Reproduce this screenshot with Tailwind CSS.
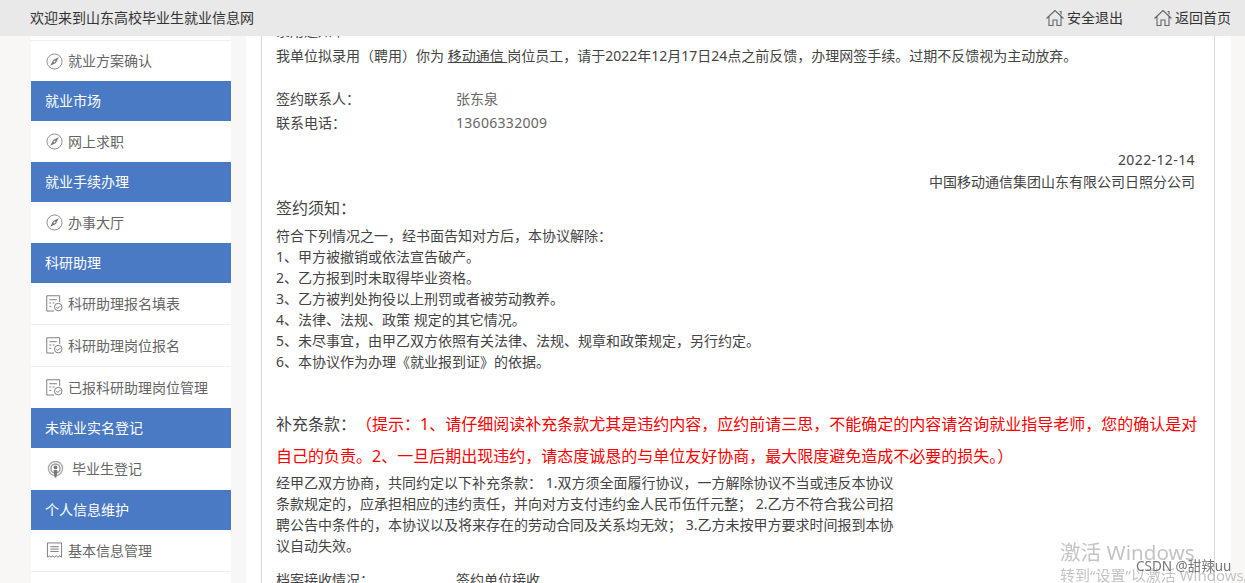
<!DOCTYPE html>
<html lang="zh-CN">
<head>
  <meta charset="UTF-8" />
  <title>山东高校毕业生就业信息网</title>
  <script src="https://cdn.jsdelivr.net/npm/@tailwindcss/browser@4"></script>
</head>
<body class="bg-[#f8f7f6] h-[583px] overflow-hidden font-['Noto_Sans','Noto_Sans_CJK_SC',sans-serif] text-sm text-[#444]">
  <svg class="hidden">
    <symbol id="compass" viewBox="0 0 18 18"><circle cx="9" cy="9" r="8" fill="none" stroke="#888" stroke-width="1"/><path d="M13.500 4.500 7.500 7.500 4.500 13.500l6-3z" fill="#777"/><circle cx="9" cy="9" r="1" fill="#fff"/></symbol>
    <symbol id="form" viewBox="0 0 18 18"><path d="M8.500 17H.8V.8h13.700v6.700M3.500 5h8M3.500 8.500h2M7 8.500h2M3.500 12h2" fill="none" stroke="#777"/><circle cx="13" cy="12.800" r="4" fill="#fff" stroke="#777"/><path d="m11 12.800 1.500 1.500 2.500-2.500" fill="none" stroke="#777"/></symbol>
    <symbol id="podcast" viewBox="0 0 18 18"><circle cx="9" cy="8" r="7.500" fill="none" stroke="#aaa" stroke-width="1.500"/><circle cx="9" cy="8" r="4.800" fill="none" stroke="#999" stroke-width="1.500"/><circle cx="9" cy="6.800" r="2" fill="#777"/><path d="M7 9.500h4L10 17.500H8z" fill="#777"/></symbol>
    <symbol id="doc" viewBox="0 0 18 18"><path d="M1.500 16V1h15v15l-1.900-1.300L12.700 16l-1.900-1.300L9 16l-1.800-1.300L5.300 16l-1.900-1.300zM4.500 5h9M4.500 7.500h9M4.500 10h9" fill="none" stroke="#777"/></symbol>
    <symbol id="home" viewBox="0 0 18 18"><path d="M.5 9.500 9 1.500l8.500 8M3 7.500V16.500h4V11h4v5.500h4V7.500M13.500 2.500h1.500v3" fill="none" stroke="#666" stroke-width="1.100"/></symbol>
  </svg>

  <header class="relative z-10 h-9 bg-[#e9e9e9] flex items-center justify-between pl-[30px] pr-[14px] text-[#333]">
    <span>欢迎来到山东高校毕业生就业信息网</span>
    <div class="flex gap-[31px]">
      <a class="flex items-center gap-[3px]"><svg class="w-[18px] h-[18px]"><use href="#home"/></svg>安全退出</a>
      <a class="flex items-center gap-[3px]"><svg class="w-[18px] h-[18px]"><use href="#home"/></svg>返回首页</a>
    </div>
  </header>

  <div class="flex h-[547px] pl-[31px]">
    <aside class="w-[200px] shrink-0 bg-white pt-1 text-[#666]">
      <div class="h-[41px] border-t border-[#eee] flex items-center pl-[15px] gap-[5px]"><svg class="w-[17px] h-[17px]"><use href="#compass"/></svg>就业方案确认</div>
      <div class="h-10 bg-[#4a7ac4] text-white flex items-center pl-[14px]">就业市场</div>
      <div class="h-[41px] flex items-center pl-[15px] gap-[5px]"><svg class="w-[17px] h-[17px]"><use href="#compass"/></svg>网上求职</div>
      <div class="h-10 bg-[#4a7ac4] text-white flex items-center pl-[14px]">就业手续办理</div>
      <div class="h-[41px] flex items-center pl-[15px] gap-[5px]"><svg class="w-[17px] h-[17px]"><use href="#compass"/></svg>办事大厅</div>
      <div class="h-10 bg-[#4a7ac4] text-white flex items-center pl-[14px]">科研助理</div>
      <div class="h-[42px] border-b border-[#eee] flex items-center pl-[15px] gap-[5px]"><svg class="w-[17px] h-[17px]"><use href="#form"/></svg>科研助理报名填表</div>
      <div class="h-[42px] border-b border-[#eee] flex items-center pl-[15px] gap-[5px]"><svg class="w-[17px] h-[17px]"><use href="#form"/></svg>科研助理岗位报名</div>
      <div class="h-[41px] flex items-center pl-[15px] gap-[5px]"><svg class="w-[17px] h-[17px]"><use href="#form"/></svg>已报科研助理岗位管理</div>
      <div class="h-10 bg-[#4a7ac4] text-white flex items-center pl-[14px]">未就业实名登记</div>
      <div class="h-[42px] flex items-center pl-4 gap-2"><svg class="w-[17px] h-[17px]"><use href="#podcast"/></svg>毕业生登记</div>
      <div class="h-10 bg-[#4a7ac4] text-white flex items-center pl-[14px]">个人信息维护</div>
      <div class="h-[42px] border-b border-[#eee] flex items-center pl-[15px] gap-[5px]"><svg class="w-[17px] h-[17px]"><use href="#doc"/></svg>基本信息管理</div>
    </aside>

    <main class="ml-[15px] w-[985px] shrink-0 bg-white pl-[15px] pr-4 h-full overflow-hidden">
      <div class="h-[640px] border-x border-[#d8d8d8] pl-[14px] pr-[16px] -mt-[14px]">
        <p class="h-[18px] leading-[18px]">录用通知书</p>
        <p class="mt-[2px] h-[28px] leading-[28px]">我单位拟录用（聘用）你为 <u>移动通信 </u>岗位员工，请于2022年12月17日24点之前反馈，办理网签手续。过期不反馈视为主动放弃。</p>
        <div class="mt-[17px] flex h-6 items-center"><span class="w-[180px]">签约联系人：</span><span class="text-[#666]">张东泉</span></div>
        <div class="flex h-6 items-center"><span class="w-[180px]">联系电话：</span><span class="text-[#666] tracking-[0.3px]">13606332009</span></div>
        <p class="mt-[14px] text-right leading-[22px] pr-[3px] tracking-[0.4px]">2022-12-14</p>
        <p class="mt-px text-right leading-[20px] pr-[3px]">中国移动通信集团山东有限公司日照分公司</p>
        <h3 class="text-base leading-6 mt-1">签约须知：</h3>
        <div class="leading-[21px] mt-[5px]">
          <p>符合下列情况之一，经书面告知对方后，本协议解除：</p>
          <p>1、甲方被撤销或依法宣告破产。</p>
          <p>2、乙方报到时未取得毕业资格。</p>
          <p>3、乙方被判处拘役以上刑罚或者被劳动教养。</p>
          <p>4、法律、法规、政策 规定的其它情况。</p>
          <p>5、未尽事宜，由甲乙双方依照有关法律、法规、规章和政策规定，另行约定。</p>
          <p>6、本协议作为办理《就业报到证》的依据。</p>
        </div>
        <p class="mt-9 text-base leading-[32px]">补充条款：<span class="text-[#f00] ml-2">（提示：1、请仔细阅读补充条款尤其是违约内容，应约前请三思，不能确定的内容请咨询就业指导老师，您的确认是对自己的负责。2、一旦后期出现违约，请态度诚恳的与单位友好协商，最大限度避免造成不必要的损失。）</span></p>
        <p class="w-[620px] leading-[21px]">经甲乙双方协商，共同约定以下补充条款： 1.双方须全面履行协议，一方解除协议不当或违反本协议条款规定的，应承担相应的违约责任，并向对方支付违约金人民币伍仟元整； 2.乙方不符合我公司招聘公告中条件的，本协议以及将来存在的劳动合同及关系均无效； 3.乙方未按甲方要求时间报到本协议自动失效。</p>
        <div class="mt-3 flex h-6 items-center"><span class="w-[180px]">档案接收情况：</span><span>签约单位接收</span></div>
      </div>
    </main>
  </div>

  <div class="fixed left-[1060px] top-[539px] whitespace-nowrap text-[#c4c4c4]">
    <p class="text-[20.6px] leading-[26px]">激活 Windows</p>
    <p class="text-[15px] leading-5">转到“设置”以激活 Windows。</p>
  </div>
  <div class="fixed left-[1136px] top-[557px] text-[13.5px] text-[#777] whitespace-nowrap">CSDN @甜辣uu</div>
</body>
</html>
